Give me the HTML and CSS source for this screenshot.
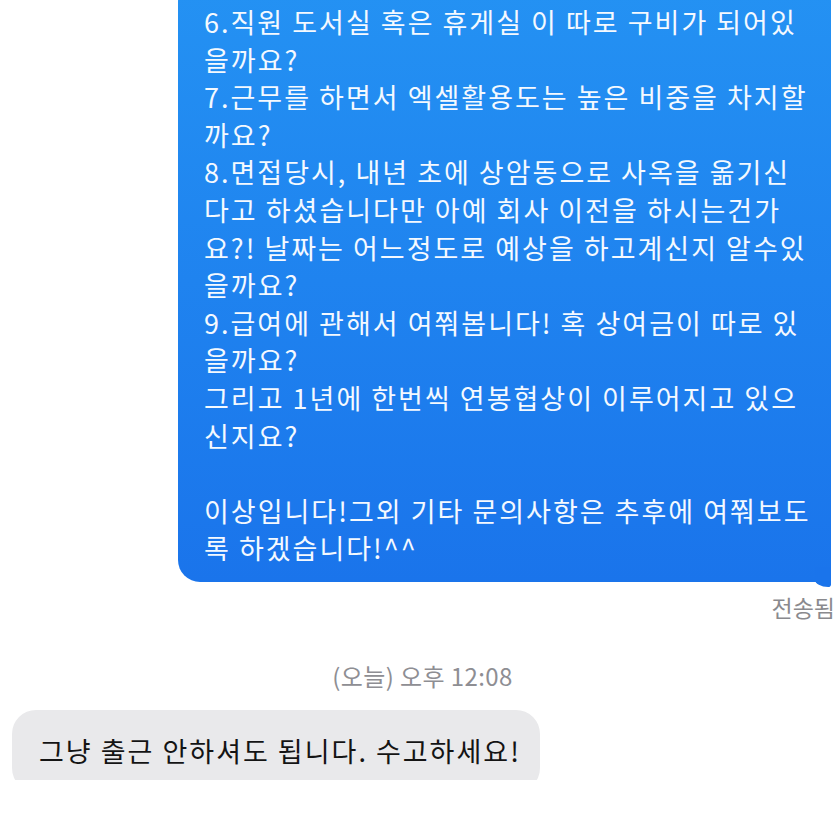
FILE: index.html
```html
<html>

<head>
  <meta name="viewport" content="width=device-width, initial-scale=1.0">
  <link rel="stylesheet" href="styles.css">
</head>

<body>
  <div class="thread">
    <div class="bubble sent">
      6.직원 도서실 혹은 휴게실 이 따로 구비가 되어있<br>
      을까요?<br>
      7.근무를 하면서 엑셀활용도는 높은 비중을 차지할<br>
      까요?<br>
      8.면접당시, 내년 초에 상암동으로 사옥을 옮기신<br>
      다고 하셨습니다만 아예 회사 이전을 하시는건가<br>
      요?! 날짜는 어느정도로 예상을 하고계신지 알수있<br>
      을까요?<br>
      9.급여에 관해서 여쭤봅니다! 혹 상여금이 따로 있<br>
      을까요?<br>
      그리고 1년에 한번씩 연봉협상이 이루어지고 있으<br>
      신지요?<br>
      <br>
      이상입니다!그외 기타 문의사항은 추후에 여쭤보도<br>
      록 하겠습니다!^^
    </div>
    <div class="status">전송됨</div>
    <div class="stamp">(오늘) 오후 12:08</div>
    <div class="clip">
      <div class="bubble received">그냥 출근 안하셔도 됩니다. 수고하세요!</div>
    </div>
  </div>
</body>

</html>
```

FILE: styles.css
```css
body {
  margin: 0;
  background-color: white;
  font-family: "Noto Sans CJK KR", "Noto Sans", sans-serif;
  overflow: hidden;
}

.thread {
  display: flex;
  flex-direction: column;
  height: 835px;
}

.bubble {
  box-sizing: border-box;
  font-size: 27px;
  letter-spacing: 2px;
  line-height: 37.6px;
}

.sent {
  position: relative;
  margin: -20px 4px 0 178px;
  padding: 23px 0 15px 26px;
  color: #f4f9ff;
  background: linear-gradient(#2492f3, #1a74eb);
  border-radius: 22px 22px 0 22px;
}
.sent::after {
  content: "";
  position: absolute;
  right: 0;
  bottom: -5px;
  width: 16px;
  height: 20px;
  background-color: #1a74eb;
  border-radius: 0 0 3px 14px / 0 0 3px 8px;
}

.status {
  margin-top: 11px;
  text-align: right;
  font-size: 23px;
  line-height: 28px;
  color: #8a8a8e;
}

.stamp {
  margin-top: 40px;
  padding-left: 10px;
  text-align: center;
  font-size: 24px;
  letter-spacing: 0.4px;
  line-height: 30px;
  color: #8e8e93;
}

.clip {
  margin-top: 19px;
  height: 70px;
  overflow: hidden;
}

.received {
  width: 528px;
  margin-left: 12px;
  padding: 22px 0 22px 27px;
  color: #141414;
  background-color: #e9e9eb;
  border-radius: 24px;
}
```
